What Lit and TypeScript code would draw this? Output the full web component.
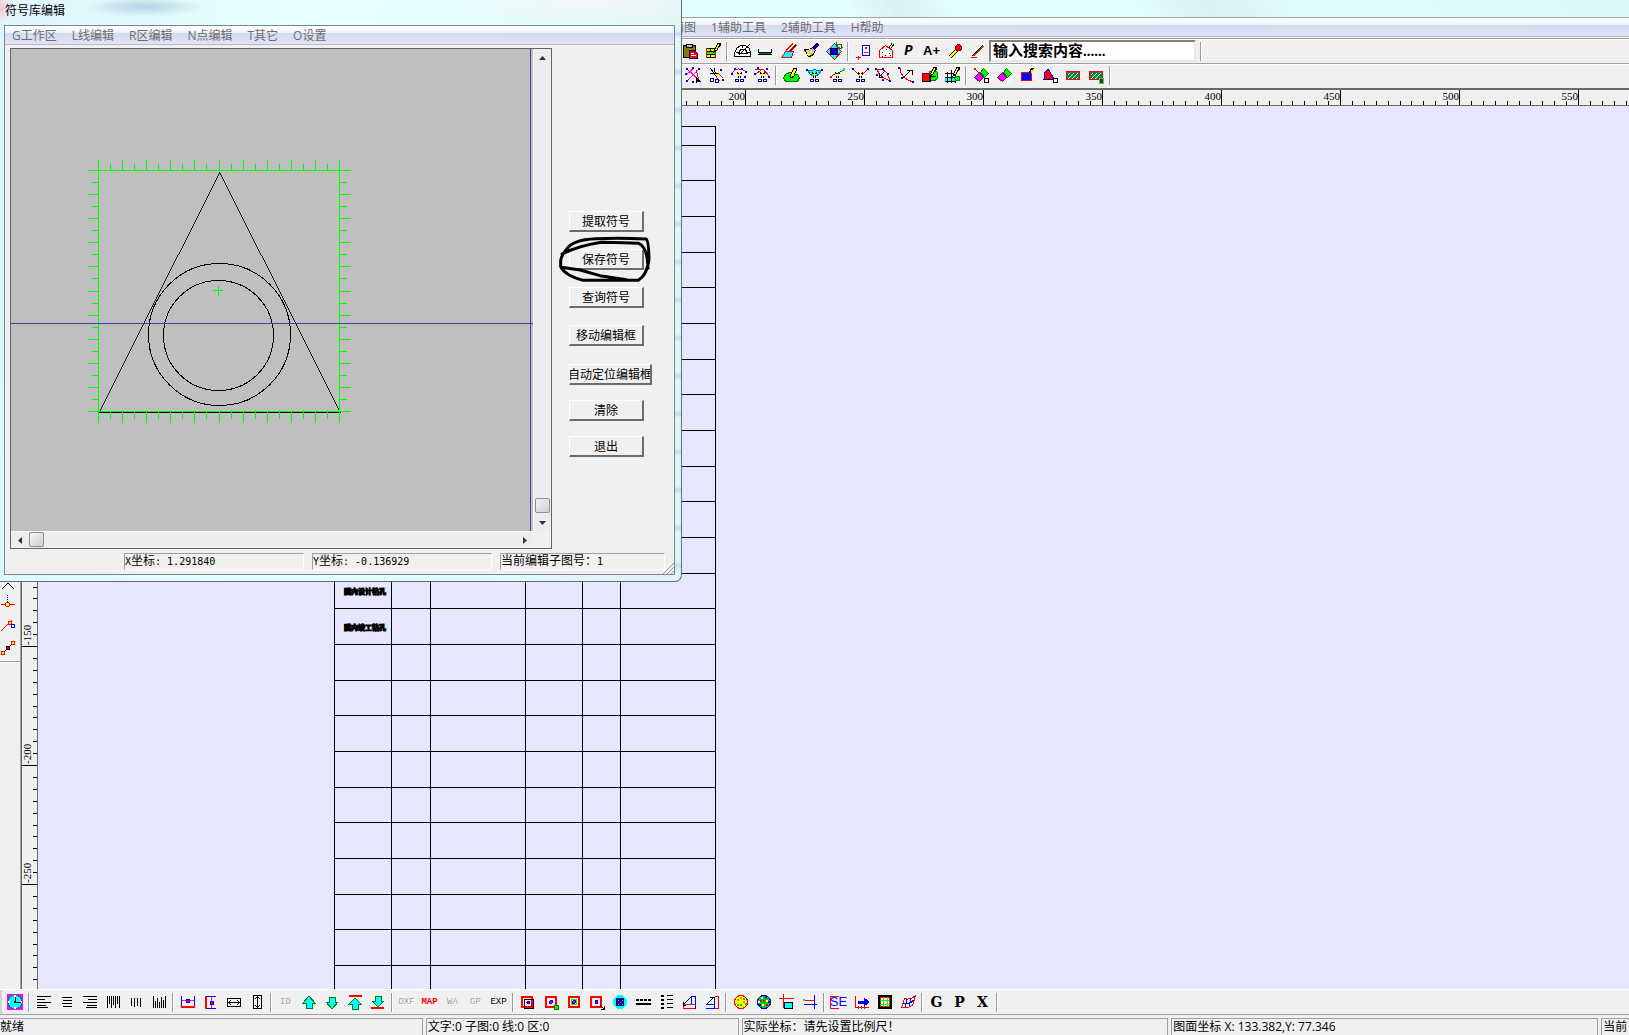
import { LitElement, html, svg, css } from "lit";
import { customElement } from "lit/decorators.js";

/* One stroke of an icon: path data, stroke colour, fill colour, stroke width. */
type Stroke = [string, string, string?, number?];

const K = "#000", R = "#f00", B = "#00f", G = "#0f0", Y = "#ff0", C = "#0ff", M = "#f0f", N = "none", D = "#000080", T = "#008080";

const circle = (x: number, y: number, r: number) =>
  `M${x - r} ${y}a${r} ${r} 0 1 0 ${2 * r} 0a${r} ${r} 0 1 0 ${-2 * r} 0z`;
const box = (x: number, y: number, w: number, h: number) => `M${x} ${y}h${w}v${h}h${-w}z`;
const dots = (...p: number[]) => {
  let d = "";
  for (let i = 0; i < p.length; i += 2) d += box(p[i], p[i + 1], 2, 2);
  return d;
};

const scissors: Stroke[] = [
  ["M8 7l4 6M13 7l-4 6", K],
  ["M9.5 9l1 2 1-2", Y, Y],
  [circle(8, 15.5, 1.5), D],
  [circle(13, 15.5, 1.5), D],
];
const pencil: Stroke[] = [
  ["M12 8l3-6h3l-4 7-3 2z", K, Y],
  ["M17 2v3", K, N, 2],
];

const icons: Record<string, Stroke[]> = {
  paste: [
    [box(3.5, 4.5, 12, 12), K, "#808000"],
    [box(6.5, 3.5, 6, 3), K, "#c0c0c0"],
    ["M9.5 9.5h5l3 3v5h-8z", D, R],
    ["M11 12.5h3M11 14.5h5", "#fff"],
  ],
  tablePen: [
    [box(3, 7, 9, 10), N, Y],
    ["M3 7.5h9M3 10.5h9M3 13.5h9M3 16.5h9M7.5 7v10", K],
    ["M3 12h9", G, N, 2],
    ["M3.5 7v10M12.5 7v10", R],
    ...pencil,
  ],
  protractor: [
    ["M2.5 15.5v-3l2-5 4-3h5l4 3 1 5v3z", K, "#fff"],
    ["M6.5 12.5l2-4h5l2 4zM7 14l11-11M10 5v2M4 11h2M16 11h2", K],
  ],
  rule: [
    ["M3.5 8v3.5h13V8", K],
    ["M5 9.5h11", "#fff"],
    ["M4 12.5h12", "#008000", N, 1],
    ["M3 13.5h14", K],
  ],
  eraser: [
    ["M3.5 16.5l4-6h8l-2 6z", R, C],
    ["M8 10l7-7M11 11l7-7", R, N, 2],
    ["M9.5 10l7-7", "#fff"],
    ["M12 10l6-6", K],
  ],
  brush: [
    ["M3.5 8.5h5l3-2 3 3-3 5-4 1z", K, "#c0c0c0"],
    ["M6 10l4 4M8 8l4 5M6 13h4", Y],
    ["M12 8l5-5", D, N, 4],
    ["M2.5 16.5h2m1 0h2m1 0h2", Y],
  ],
  rotate: [
    ["M2.5 10.5l8-8 7 8-7 8z", R, C],
    [box(6.5, 7.5, 7, 6), K, B],
    ["M13 3h4v5M19 6l-2 2-2-2M13 1l-1 2 2 2", "#008000"],
  ],
  card: [
    [box(9.5, 4.5, 7, 10), B, "#fff"],
    [dots(12, 6), N, R],
    ["M11 11.5h4M5.5 15v4M3 16.5h5", R],
  ],
  house: [
    ["M3.5 9.5l6-5 7 5v7h-13z", R],
    ["M6 11h1m3-3h1m2 4h1m-5 2h1m-4 1h1m7-1h1", K],
    ["M14 7l3-4", K, N, 3],
    ["M14 7l3-4", Y],
  ],
  pin: [
    ["M5 16l7-7", K, N, 4],
    ["M5 16l7-7", Y, N, 2],
    [circle(13.5, 6.5, 3), "#800000", R],
  ],
  pen: [
    ["M5 15L15 5", "#008000", N, 1],
    ["M6 15L16 5", R],
    ["M4 15L15 4", K],
    ["M3 16.5h6", R],
  ],
  cutAll: [
    ["M4 4l13 12M3 10l8-7M5 15L16 4", M, N, 1],
    ["M4 4l3 3M13 5l3 10", R],
    [dots(2, 8, 3, 3, 9, 2, 15, 3, 3, 15, 9, 16), N, B],
    ["M13 12v6l2-2 3 1z", K, K],
  ],
  cutLine: [
    ["M4 3l7 9M4 8l8 1M8 3l2 8", K],
    ["M12 8l5 5M10 12l4 4", R],
    [dots(14, 4, 16, 14), N, B],
    [circle(6, 15, 2), D],
    [circle(11, 16, 2), D],
    ["M9 9h3v3", Y],
  ],
  cutArc: [...scissors, ["M3 8q5-7 13-2", R], [dots(2, 8, 5, 3, 12, 3, 16, 6, 15, 11), N, B]],
  cutArc2: [...scissors, ["M3 5l8-1 6 7M4 9l5-4", R], [dots(2, 8, 5, 2, 14, 3, 16, 11), N, B]],
  blob: [
    ["M3.5 15.5l-1-3 3-4 4-1 2 2h5l2 3-2 4h-11z", "#008000", G],
    ["M9 11l4-8h3l-3 8-3 2z", K, Y],
  ],
  cutFan: [["M3.500 5.500h4l3-1 3 1h4l-3 4-4 2-4-2z", T, C], ...scissors, [dots(2, 4, 17, 4), N, B]],
  cutLink: [...scissors, ["M10 9l8-5", "#008000"], ["M3 12l5-3", R], [dots(3, 11), N, R], [dots(16, 3), N, G]],
  cutY: [...scissors, ["M3 4l6 6M18 4l-6 6", R], [dots(2, 3, 17, 3), N, B]],
  leaf: [
    ["M4 4l5 0 5 4 3 8-6-3-5-4z", R],
    [dots(2, 3, 9, 3, 14, 8, 16, 15, 9, 14, 3, 9), N, B],
    ["M11 7L7 11M6 8v4h4", K],
  ],
  curve: [
    ["M4 3q0 10 13 14", R],
    [dots(2, 2, 5, 12, 16, 16), N, B],
    ["M7 13l8-8M11 5h5v5", K],
  ],
  fillPen: [
    ["M10 7l4-2 4 2v7l-3 2-4-1z", "#008000", G],
    [box(3, 8, 7, 8), "#800000", R],
    ["M3 16h8v-5h6", K],
    ...pencil,
  ],
  gridPen: [
    [box(3, 12, 10, 5), N, C],
    ["M3 8.5h10M3 12.5h11M3 16.5h11M5.5 7v11M9.5 5v13M13.5 5v13", K],
    [circle(15.5, 13.5, 2.5), "#008000", G],
    ...pencil,
  ],
  shapes: [
    ["M3.5 12.500l5-5 4 5-4 4z", "#800080", M],
    ["M9.5 7.500l3-4 5 5-4 4z", "#008000", G],
    [dots(3, 3), N, R],
    ["M5 5l3 3", R],
    [box(13.5, 13.5, 4, 4), K],
  ],
  shapes2: [
    ["M3.500 12.500l5-5 4 5-4 4z", "#800080", M],
    ["M9.500 7.500l3-4 5 5-4 4z", "#008000", G],
    ["M4 4l3 3M15 14v4", "#fff"],
  ],
  bluePen: [[box(4, 7, 10, 8), R, B, 1], ["M13 8l3-5", K, N, 3], ["M14 7l4-3", Y, N, 2]],
  wedge: [
    ["M4 14.5V8l4-4 5 8v2.5z", B, R],
    ["M3 14.5h10", D],
    [box(13.5, 13.5, 4, 4), K],
  ],
  hatch: [[box(3.5, 6.5, 13, 8), R, T, 1], ["M5 14l6-6M9 14l6-6M5 10l2-2M13 14l2-2", Y]],
  hatch2: [[box(3.5, 6.5, 13, 8), R, T, 1], ["M5 14l6-6M9 14l6-6M5 10l2-2", Y], [box(13.5, 13.5, 4, 5), G, "#800080"]],
  clock: [
    [box(2, 2, 16, 16), N, M],
    [circle(10, 10, 7), T, C],
    [dots(9, 3, 9, 15, 3, 9, 15, 9), N, "#fff"],
    ["M10.5 5v5.500h5", K, N, 1],
    [dots(9, 9), N, D],
  ],
  left: [["M3 4.5h14M3 7.5h8M3 10.5h14M3 13.5h9M3 15.5h11", K]],
  center: [["M5 5.5h10M6 8.5h9M5 11.5h10M6 14.5h9", K]],
  right: [["M3 4.5h14M8 7.5h9M3 10.5h14M7 13.5h10M6 15.5h11", K]],
  vTop: [["M4.5 4v12M6.5 4v8M8.5 4v12M10.5 4v9M12.5 4v12M14.5 4v8M16.5 4v12", K]],
  vMid: [["M5.5 6v8M8.5 6v9M11.5 6v8M14.5 6v9", K]],
  vBot: [["M4.5 4v12M6.5 9v7M8.5 6v10M10.5 10v6M12.5 5v11M14.5 8v8M16.5 4v12", K]],
  holdH: [["M3.5 4v10M16.5 4v10", B], ["M4 8.5h12", M], ["M3 15h14", R, N, 2], [box(8, 7, 3, 3), B, R, 1]],
  holdV: [["M5 4.5h10M5 16.5h10", B], ["M10.5 5v11", M], ["M5 4v13", R, N, 2], [box(9, 9, 3, 3), B, R, 1]],
  fitH: [[box(3.5, 6.5, 13, 8), K], ["M5 10.5h10M7 8l-2 2.500 2 2.500M13 8l2 2.500-2 2.500", K]],
  fitV: [[box(6.5, 3.5, 8, 13), K], ["M10.5 5v10M8 7l2.500-2 2.500 2M8 13l2.500 2 2.500-2", K]],
  up: [["M10 4l6 7h-3v5H7v-5H4z", "#008000", C]],
  down: [["M10 17l6-7h-3V5H7v5H4z", "#008000", C]],
  top: [["M4 4h13", R, N, 2], ["M10 6l6 6h-3v5H7v-5H4z", "#008000", C]],
  bottom: [["M3 16h13", R, N, 2], ["M10 15l6-6h-3V4H7v5H4z", "#008000", C]],
  frame: [[box(4, 5, 10, 10), R, N, 2], [box(6.5, 7.5, 9, 9), K], [circle(10.500, 10.500, 1.5), B, R]],
  frameTag: [[box(5, 5, 10, 10), R, N, 2], [circle(10, 10, 1.5), B, R], [box(13, 13, 4, 4), "#008000", G]],
  frameIn: [[box(5, 5, 10, 10), R, N, 2], [box(7.5, 7.5, 5, 5), G, "#fff"], [circle(10, 10, 1.5), B, R]],
  frameArrow: [[box(4, 5, 10, 10), R, N, 2], [circle(9.500, 10, 1.5), B, R], ["M13 13l4 4M17 14v3h-3", K]],
  globe: [[circle(10, 10, 6), C, C, 2], [box(6.500, 6.500, 7, 7), D, D], ["M8 8h1m3 0h1m-3 2h1m-3 2h1m3 0h1", C]],
  rows: [[box(3, 7, 3, 2) + box(7, 7, 3, 2) + box(11, 7, 3, 2) + box(15, 7, 3, 2), N, K], ["M3 12h15", K, N, 2]],
  cols: [[box(5, 3, 3, 2) + box(5, 7, 3, 2) + box(5, 11, 3, 2) + box(5, 15, 3, 2), N, K], ["M11 3.5h6M11 7.5h6M11 11.5h6M11 15.5h6", K]],
  slopeL: [["M4 16.5h12M4 12.5h12M4.5 12v5", R], ["M16.500 4v13M12.5 5v7M12 4.5h5M5 12l8-8", B], ["M4 13l6-6M4 10v3h3", K]],
  slopeR: [["M4 16.5h12M5 12.5h7M16.5 4v13M12.500 4.500h4", R], ["M4 16.5h9M4 12.500h9M12.500 5v12M5 12l7-7", B], ["M6 11l5-5M8 5h4v3", K]],
  ballY: [[circle(10, 10, 6.5), R, Y], [dots(6, 7, 12, 6, 9, 12, 14, 11, 6, 12), N, "#0c0"], [dots(9, 5, 12, 9), N, "#f80"]],
  ballG: [[circle(10, 10, 6.5), B, "#0c0"], [dots(7, 5, 12, 8, 8, 12, 4, 9), N, "#fff"], [dots(9, 8, 12, 12, 6, 8), N, R], [dots(11, 4, 5, 12, 14, 9), N, D]],
  crossBox: [["M2 6.500h15M6.5 2v14", R], [box(7.5, 10.5, 8, 6), K, C]],
  crossEnd: [["M14.500 3v14", B], ["M4 12.500h13", B], ["M5 8.500h9", R], [dots(3, 7), N, G]],
  axis: [["M3.500 4v12M3 15.500h14M6 14v3M9 14v3M12 14v3", R], ["M6 10h6", B, N, 3], ["M12 6l5 4-5 4z", B, B]],
  mesh: [[box(4, 4, 12, 12), K, "#fff", 2], [box(5.500, 5.500, 9, 9), R], ["M8.5 5v10M12.500 5v10M5 8.5h10M5 12.5h10", G]],
  warp: [["M3.500 15.500l3-9q6 2 11-3l-3 10q-5 3-11 2z", R], ["M5 11q6 2 11-3M9 7L7 16M13 6l-2 9", B]],
  snapA: [["M1 17l6-6 6 6", K]],
  snapB: [["M6.500 1v1m0 1v1m0 1v1m0 1v1", B], ["M0 10.500h14", R], [circle(6.5, 10.5, 2), R, Y]],
  snapC: [["M0 15L11 4", R], [circle(9, 7, 2), R, Y], [circle(12, 10, 2), B, "#fff"]],
  snapD: [["M2 15L12 5", K], [circle(2, 15, 2), R, Y], [circle(12, 5, 2), R, Y], [circle(7, 10, 2), K, R]],
};

const draw = (name: string) => html`<svg class="icon" viewBox="-1 0 21 21" aria-hidden="true">
  ${icons[name].map(([d, s, f, w]) => svg`<path d=${d} stroke=${s} fill=${f ?? "none"} stroke-width=${w ?? 1}></path>`)}
</svg>`;

/* "|" is a divider; "style:Label" is a lettered button; the rest are icon names. */
const tool = (item: string) => {
  if (item === "|") return html`<span class="divider"></span>`;
  const [style, label] = item.split(":");
  if (label) return html`<button class="tool ${style}">${label}</button>`;
  return html`<button class="tool" aria-label=${item}>${draw(item)}</button>`;
};

const row1 = "paste tablePen | protractor rule eraser brush rotate | card house italic:P plus:A+ pin pen".split(" ");
const row2 = "cutAll cutLine cutArc cutArc2 | blob cutFan cutLink cutY leaf curve fillPen gridPen | shapes shapes2 bluePen wedge hatch hatch2 |".split(" ");
const row3 = ("clock | left center right vTop vMid vBot | holdH holdV fitH fitV | dim:ID up down top bottom | " +
  "dim:DXF red:MAP dim:WA dim:GP small:EXP | frame frameTag frameIn frameArrow globe rows cols slopeL slopeR | " +
  "ballY ballG crossBox crossEnd | se:SE axis mesh warp | black:G black:P black:X |").split(" ");

@customElement("symbol-dialog")
export class SymbolDialog extends LitElement {
  static styles = css`
    :host { display: block; }
    .frame {
      position: relative;
      box-sizing: border-box;
      padding: 0 6px 6px 4px;
      border: solid #5f6f76;
      border-width: 0 1px 1px 0;
      border-radius: 0 0 7px 0;
      background:
        radial-gradient(ellipse 60px 10px at 145px 7px, #a9c8dccc, transparent),
        radial-gradient(ellipse 16px 14px at 0 8px, #f4c9d4, transparent),
        radial-gradient(ellipse 150px 20px at 590px 4px, #f4f6f7, transparent),
        repeating-linear-gradient(180deg, transparent 0 30px, #c3dcf4 34px, transparent 38px) right 0 top 0 / 6px 100% no-repeat,
        linear-gradient(100deg, #dff5fb, #e6ffff 40%, #e2fbfb 75%, #dff3f1);
      font: 12px/16px "Open Sans", "Noto Sans CJK SC", sans-serif;
      color: #000;
    }
    .caption { margin: 0; padding: 3px 0 6px 1px; font-size: 12px; line-height: 16px; font-weight: 400; }
    .client { border: 1px solid #77878e; background: #f0f0f0; position: relative; }
    nav {
      display: flex;
      gap: 15px;
      padding: 0 7px;
      height: 18px;
      line-height: 20px;
      border-bottom: 1px solid #b6bccc;
      background: linear-gradient(#fff, #eef1f9 38%, #d5dbee 40%, #dfe5f5);
    }
    nav a { color: #6d6d6d; text-decoration: none; white-space: nowrap; }
    .body { display: flex; padding: 3px 0 0 5px; }
    .view {
      display: grid;
      grid-template-columns: 522px 18px;
      grid-template-rows: 482px 17px;
      border: 1px solid #646464;
      background: #f0f0f0;
    }
    .plot { display: block; width: 522px; height: 482px; background: #bfbfbf; shape-rendering: crispEdges; }
    .bar { display: flex; background: #ededed; border: 0 solid #fafafa; }
    .bar.down { flex-direction: column; align-items: center; border-left-width: 1px; }
    .bar.across { border-top-width: 1px; }
    .bar button { width: 18px; height: 16px; padding: 0; border: 0; background: none; display: grid; place-items: center; }
    .bar.down button { height: 18px; }
    .bar svg { width: 7px; height: 7px; fill: #333; }
    .space { flex: 1; }
    .thumb { box-sizing: border-box; width: 15px; height: 15px; border: 1px solid #8f8f8f; border-radius: 2px; background: linear-gradient(135deg, #f6f6f6, #cfcfcf); }
    .actions { display: flex; flex-direction: column; gap: 18px; padding: 163px 0 0 17px; }
    .group { display: flex; flex-direction: column; gap: 17px; align-items: flex-start; }
    .group.tight { gap: 15px; }
    .action {
      box-sizing: border-box;
      width: 75px;
      height: 21px;
      padding: 0;
      overflow: hidden;
      white-space: nowrap;
      display: flex;
      align-items: center;
      justify-content: center;
      font: 12px/16px "Noto Sans CJK SC", sans-serif;
      color: #000;
      background: #f0f0f0;
      border: solid;
      border-width: 1px 2px 2px 1px;
      border-color: #fff #6c6c6c #6c6c6c #fff;
    }
    .action.wide { width: 83px; }
    .fields { display: flex; gap: 8px; padding: 4px 9px 4px 119px; }
    .field {
      box-sizing: border-box;
      width: 180px;
      height: 17px;
      line-height: 12px;
      border: 1px solid;
      border-color: #a0a0a0 #fff #fff #a0a0a0;
      white-space: pre;
      font-family: "Noto Sans CJK SC", sans-serif;
    }
    .field.last { width: 165px; }
    .mono { font: 10px/12px "DejaVu Sans Mono", monospace; }
    .grip { position: absolute; right: 0; bottom: 0; width: 12px; height: 12px; stroke: #9a9a9a; }
    .ink { position: absolute; left: 550px; top: 230px; width: 110px; height: 60px; fill: none; stroke: #000; stroke-width: 9; stroke-linejoin: round; stroke-linecap: round; pointer-events: none; }
  `;

  private scale() {
    let d = "";
    for (let i = 0; i <= 20; i++) {
      const at = Math.round(i * 12.05);
      const n = i % 2 ? 7 : 11;
      d += `M${87.5 + at} 121.500v${-n}M${87.5 + at} 362.500v${n}M87.500 ${121.5 + at}h${-n}M328.500 ${121.5 + at}h${n}`;
    }
    return d;
  }

  render() {
    const action = (t: string, wide = false) => html`<button class="action ${wide ? "wide" : ""}">${t}</button>`;
    return html`
      <section class="frame" role="dialog" aria-labelledby="caption">
        <h1 class="caption" id="caption">符号库编辑</h1>
        <div class="client">
          <nav>${["G工作区", "L线编辑", "R区编辑", "N点编辑", "T其它", "O设置"].map((t) => html`<a href="#">${t}</a>`)}</nav>
          <div class="body">
            <div class="view">
              <svg class="plot" viewBox="0 0 522 482">
                <g fill="none" stroke="#000">
                  <path d="M88 363.500L208.500 122.500 329 363.500" stroke-width="0.850"></path>
                  <path d="M88 363.500h242"></path>
                  <circle cx="208.500" cy="285.500" r="71"></circle>
                  <circle cx="207.500" cy="286.500" r="55"></circle>
                  <path d="M87.500 121.500h241v241h-241z" stroke="#0f0"></path>
                  <path d=${this.scale()} stroke="#0f0"></path>
                  <path d="M202 241.500h10M207.500 237v10" stroke="#0f0"></path>
                  <path d="M0 274.500h522M519.500 0v482" stroke="#4040b0"></path>
                </g>
              </svg>
              <div class="bar down">
                <button aria-label="向上"><svg viewBox="0 0 7 7"><path d="M0 5h7L3.500 1z"></path></svg></button>
                <span class="space"></span>
                <span class="thumb"></span>
                <button aria-label="向下"><svg viewBox="0 0 7 7"><path d="M0 2h7L3.500 6z"></path></svg></button>
              </div>
              <div class="bar across">
                <button aria-label="向左"><svg viewBox="0 0 7 7"><path d="M5 0v7L1 3.500z"></path></svg></button>
                <span class="thumb"></span>
                <span class="space"></span>
                <button aria-label="向右"><svg viewBox="0 0 7 7"><path d="M2 0v7l4-3.500z"></path></svg></button>
              </div>
            </div>
            <div class="actions">
              <div class="group">${action("提取符号")}${action("保存符号")}${action("查询符号")}${action("移动编辑框")}</div>
              <div class="group tight">${action("自动定位编辑框", true)}${action("清除")}${action("退出")}</div>
            </div>
          </div>
          <div class="fields">
            <output class="field"><span class="mono">X</span>坐标<span class="mono">: 1.291840</span></output>
            <output class="field"><span class="mono">Y</span>坐标<span class="mono">: -0.136929</span></output>
            <output class="field last">当前编辑子图号：<span class="mono">1</span></output>
          </div>
          <svg class="grip" viewBox="0 0 12 12"><path d="M1 12L12 1M5 12l7-7M9 12l3-3"></path></svg>
        </div>
        <svg class="ink" viewBox="90 120 330 180" aria-hidden="true">
          <path d="M378 147Q300 143 228 146T140 178Q124 196 122 212V230Q136 258 190 271H355Q380 256 387 210 386 150 378 147M126 192Q180 166 245 157L310 158 356 160Q382 170 384 235M124 232L180 240 240 257 320 269"></path>
        </svg>
      </section>
    `;
  }
}

@customElement("app-root")
export class AppRoot extends LitElement {
  static styles = css`
    :host { display: block; }
    .app {
      position: relative;
      display: flex;
      flex-direction: column;
      height: 100vh;
      overflow: hidden;
      background: #f0f0f0;
      color: #000;
      font: 12px/16px "Open Sans", "Noto Sans CJK SC", sans-serif;
    }
    .glass {
      flex: none;
      height: 17px;
      background: linear-gradient(60deg, #e4ffff 52%, #d8f0f0 55%, #e2fdfd 58% 70%, #d8f2f2 74%, #e2fdfd 80%, #dcf8f8);
      border-bottom: 1px solid #93a5a5;
    }
    .menu {
      flex: none;
      display: flex;
      gap: 15px;
      height: 18px;
      line-height: 20px;
      padding-left: 672px;
      border-bottom: 1px solid #b3b9cc;
      background: linear-gradient(#fff, #eef1f9 38%, #d5dbee 40%, #dfe5f5);
    }
    .menu a { color: #6d6d6d; text-decoration: none; white-space: nowrap; }
    .strip {
      flex: none;
      display: flex;
      align-items: center;
      box-sizing: border-box;
      height: 25px;
      border-top: 1px solid #a0a0a0;
      box-shadow: inset 0 1px #fff;
      padding-left: 678px;
    }
    .strip.first { margin-top: 1px; }
    .strip.second { padding: 0 0 2px 681px; }
    .strip.foot { border-top: 1px solid #fff; border-bottom: 1px solid #a0a0a0; height: 26px; padding-left: 3px; box-shadow: inset 2px 0 #d0d0d0; }
    .tool { flex: none; width: 23px; height: 21px; padding: 0; border: 0; background: none; color: #000; display: grid; place-items: center; white-space: nowrap; line-height: 20px; }
    .icon { display: block; width: 21px; height: 21px; shape-rendering: crispEdges; }
    .italic { font: italic 700 14px/20px "Liberation Mono", monospace; }
    .plus { font: 700 13px/20px "Liberation Sans", sans-serif; }
    .dim { font: 9px/20px "Liberation Mono", monospace; color: #a0a0a0; text-shadow: 1px 1px #fff; }
    .red { font: 700 9px/20px "Liberation Mono", monospace; color: #f00; }
    .small { font: 9px/20px "Liberation Mono", monospace; color: #000; }
    .se {
      font: 13px/20px "Liberation Sans", sans-serif;
      color: #00f;
      background:
        linear-gradient(#f00, #f00) 3px 4px / 9px 1px no-repeat,
        linear-gradient(#f00, #f00) 3px 16px / 9px 1px no-repeat,
        linear-gradient(#f00, #f00) 3px 4px / 1px 12px no-repeat;
    }
    .black { font: 700 14px/20px "DejaVu Serif", serif; }
    .divider { flex: none; width: 3px; height: 19px; margin-left: 2px; border-left: 1px solid #9a9a9a; box-shadow: inset 1px 0 #fff; }
    .search {
      box-sizing: border-box;
      width: 207px;
      height: 22px;
      margin: 0 2px 0 0;
      padding: 0 2px;
      border: 2px solid;
      border-color: #808080 #e8e8e8 #e8e8e8 #808080;
      background: #fff;
      font: 700 15px/18px "Liberation Serif", "Noto Sans CJK SC", serif;
      color: #000;
    }
    .search::placeholder { color: #000; opacity: 1; }
    .hruler { flex: none; display: block; width: 100%; height: 15px; border-top: 2px solid #6a6a6a; border-bottom: 1px solid #6a6a6a; shape-rendering: crispEdges; }
    .work { flex: 1; min-height: 0; display: grid; grid-template-columns: 21px 17px 1fr; }
    .side { display: flex; flex-direction: column; justify-content: flex-start; min-height: 0; box-sizing: border-box; padding-top: 465px; border-right: 1px solid #a0a0a0; }
    .side .tool { width: 20px; height: 22px; place-items: center start; }
    .end { border-top: 1px solid #a0a0a0; border-bottom: 1px solid #fff; margin-top: 2px; }
    .vruler { display: block; width: 15px; height: 100%; border-left: 1px solid #6a6a6a; border-right: 1px solid #6a6a6a; shape-rendering: crispEdges; }
    text { font: 11px "Liberation Serif", serif; }
    .sheet { position: relative; overflow: hidden; background: #e6e6ff; }
    .grid { position: absolute; left: 296px; top: 20px; border-collapse: collapse; table-layout: fixed; width: 382px; }
    .grid td { box-sizing: border-box; height: 36px; padding: 0 0 0 4px; border: 1px solid #000; font: 700 7px/8px "Noto Sans CJK SC", sans-serif; -webkit-text-stroke: 1px #000; white-space: nowrap; text-align: center; }
    .grid tr:nth-child(3n + 2) td { height: 35px; }
    .grid tr:first-child td { height: 19px; }
    .status { flex: none; display: flex; gap: 3px; height: 17px; margin-top: 3px; overflow: hidden; }
    .status span { box-sizing: border-box; border: 1px solid #a0a0a0; border-bottom: 0; padding-left: 1px; white-space: nowrap; flex: 427 1 0; line-height: 15px; }
    .status .ready { flex-grow: 425; border-left: 0; padding: 0; }
    .status .count { flex-grow: 312; }
    .status .tail { flex-grow: 26; border-right: 0; }
    .dialog { position: absolute; left: 0; top: 0; }
  `;

  private onResize = () => this.requestUpdate();

  connectedCallback() {
    super.connectedCallback();
    window.addEventListener("resize", this.onResize);
  }

  disconnectedCallback() {
    window.removeEventListener("resize", this.onResize);
    super.disconnectedCallback();
  }

  private ruler(from: number, to: number, origin: number, vertical: boolean) {
    let d = "";
    for (let i = from; i <= to; i++) {
      const at = origin + Math.round(i * 11.9) + 0.5;
      const n = i % 10 ? 4 : 15;
      d += vertical ? `M15 ${at}h${-n}` : `M${at} 15v${-n}`;
    }
    return svg`<path d=${d} stroke="#000" fill="none"></path>`;
  }

  private cells(row: number) {
    const label = row === 13 ? "隧内设计钻孔" : row === 14 ? "隧内竣工钻孔" : "";
    return html`<tr><td>${label}</td><td></td><td></td><td></td><td></td><td></td></tr>`;
  }

  render() {
    const across = Math.max(0, Math.floor((window.innerWidth - 745) / 119) + 1);
    const down = Math.max(0, Math.floor((window.innerHeight - 692) / 119) + 1);
    return html`
      <main class="app">
        <div class="glass"></div>
        <nav class="menu">${["面图", "1辅助工具", "2辅助工具", "H帮助"].map((t) => html`<a href="#">${t}</a>`)}</nav>
        <div class="strip first">
          ${row1.map(tool)}
          <input class="search" type="text" aria-label="搜索" placeholder="输入搜索内容......" />
          ${tool("|")}
        </div>
        <div class="strip second">${row2.map(tool)}</div>
        <svg class="hruler">
          ${this.ruler(-10, 300, 745, false)}
          ${Array.from({ length: across }, (_, i) => svg`<text x=${745 + i * 119} y="10" text-anchor="end">${200 + i * 50}</text>`)}
        </svg>
        <div class="work">
          <div class="side">
            ${["snapA", "snapB", "snapC", "snapD"].map(tool)}
            <span class="end"></span>
          </div>
          <svg class="vruler">
            ${this.ruler(-10, 120, 540, true)}
            ${Array.from({ length: down }, (_, i) => svg`<text transform=${`translate(9 ${539 + i * 119}) rotate(-90)`}>${-150 - i * 50}</text>`)}
          </svg>
          <div class="sheet">
            <table class="grid">
              <colgroup>${[57, 39, 95, 57, 38, 95].map((w) => html`<col width=${w} />`)}</colgroup>
              <tbody>${Array.from({ length: 26 }, (_, i) => this.cells(i))}</tbody>
            </table>
          </div>
        </div>
        <div class="strip foot">${row3.map(tool)}</div>
        <footer class="status">
          <span class="ready">就绪</span>
          <span class="count">文字:0 子图:0 线:0 区:0</span>
          <span>实际坐标：请先设置比例尺！</span>
          <span>图面坐标 X: 133.382,Y: 77.346</span>
          <span class="tail">当前</span>
        </footer>
        <symbol-dialog class="dialog"></symbol-dialog>
      </main>
    `;
  }
}
